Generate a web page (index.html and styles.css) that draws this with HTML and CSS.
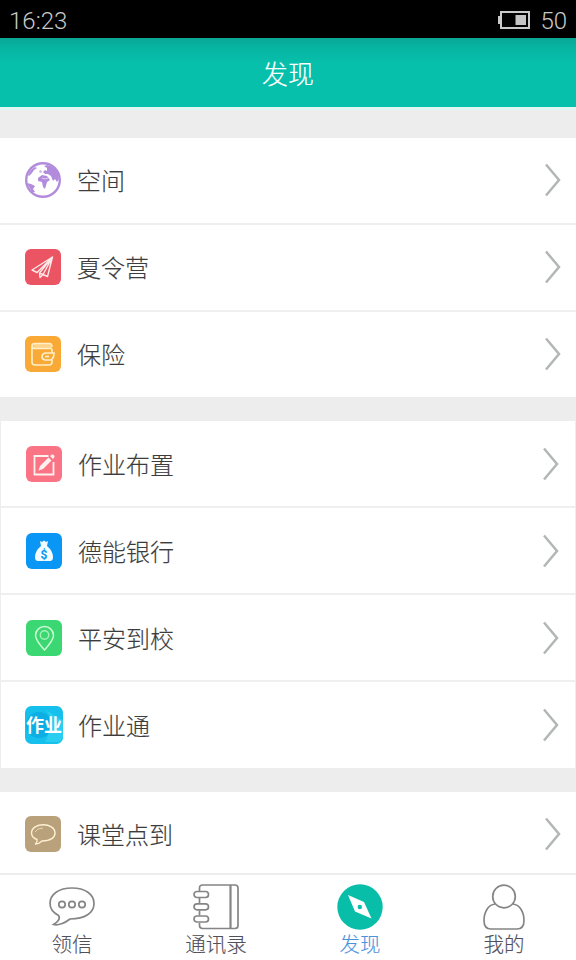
FILE: index.html
```html
<!DOCTYPE html>
<html lang="zh-CN">
<head>
<meta charset="utf-8">
<title>发现</title>
<link rel="stylesheet" href="styles.css">
</head>
<body>
<div class="status">
  <span>16:23</span>
  <div class="power">
    <svg width="32" height="18" viewBox="0 0 32 18"><path d="M3 1H31V17H3Z" fill="none" stroke="#c9c9c9" stroke-width="2"/><path d="M0 5H2V13H0Z" fill="#c9c9c9"/><path d="M17.500 4H28V14H17.500Z" fill="#c4c4c4"/></svg>
    <span>50</span>
  </div>
</div>
<header class="header">发现</header>
<main class="list">
  <section class="group">
    <div class="row">
      <svg class="icon" viewBox="0 0 36 36"><circle cx="18" cy="18" r="18" fill="#b38bdc"/><circle cx="18" cy="18" r="15.600" fill="#fff"/><path d="M3 13L6 8L10 5L12 6L9 8L7 11L4 14ZM19 4L22 3L28 5L33 10L34 17L32 20L30 17L28 19L26 14L23 12L20 12L18 10L20 8L22 9L22 6ZM13 16L17 13L22 14L25 18L22 20L20 27L18 25L17 20L13 19ZM2 21L6 22L10 24L8 27L10 30L7 30Z" fill="#b38bdc"/><path d="M14 9L16 8L17 10L15 11Z" fill="#c9aee6"/><path d="M17 16L20 17L23 16" fill="none" stroke="#f3e9fb" stroke-width=".7"/></svg>
      <span class="label">空间</span>
      <svg class="arrow" viewBox="0 0 18 34"><path d="M2 1.500L15 17L2 32.500"/></svg>
    </div>
    <div class="row">
      <svg class="icon" viewBox="0 0 36 36"><rect width="36" height="36" rx="6" fill="#eb5463"/><path d="M27.500 8L7 21L12 23.500L27.500 8L14.500 24L22.500 27.500L27.500 8L18 25.500L15 28.500L14.500 24" fill="none" stroke="#ffe9e8" stroke-width="1.400" stroke-linejoin="round"/></svg>
      <span class="label">夏令营</span>
      <svg class="arrow" viewBox="0 0 18 34"><path d="M2 1.500L15 17L2 32.500"/></svg>
    </div>
    <div class="row">
      <svg class="icon" viewBox="0 0 36 36"><rect width="36" height="36" rx="6" fill="#f9a936"/><path d="M9 8H25L27 12H8Z" fill="#ffd48a"/><path d="M27 17V14Q27 12.500 25 12.500H9Q7 12 7 10Q7 7.500 10 7.500H24Q27 7.500 27 11M7 10V26Q7 29 10 29H24Q27 29 27 26V24M28 17H20Q17 18 17 20.500Q17 23.500 20 24H26Q29 22 29 17Z" fill="none" stroke="#fff0c9" stroke-width="1.600"/><path d="M20 20.500H24" stroke="#fff0c9" stroke-width="1.800"/></svg>
      <span class="label">保险</span>
      <svg class="arrow" viewBox="0 0 18 34"><path d="M2 1.500L15 17L2 32.500"/></svg>
    </div>
  </section>
  <section class="group inset">
    <div class="row">
      <svg class="icon" viewBox="0 0 36 36"><rect width="36" height="36" rx="6" fill="#fb7486"/><path d="M22.500 10H8.500V28.500H27.500V16" fill="none" stroke="#fff1ee" stroke-width="1.800"/><path d="M12.500 24.500L14 20L22.500 11.500L25.500 14.500L17 23ZM24 10L26 8.500Q28 8 28.500 10Q29 11 27 13Z" fill="#fff1ee"/></svg>
      <span class="label">作业布置</span>
      <svg class="arrow" viewBox="0 0 18 34"><path d="M2 1.500L15 17L2 32.500"/></svg>
    </div>
    <div class="row">
      <svg class="icon" viewBox="0 0 36 36"><rect width="36" height="36" rx="6" fill="#0996f5"/><path d="M14 8L16 9L18 7.500L20 9L22 8L21 13Q27 18 27 24Q27 28 24 28H12Q9 28 9 24Q9 18 15 13Z" fill="#f4fbff"/><text class="money" x="18" y="25.500" text-anchor="middle">$</text></svg>
      <span class="label">德能银行</span>
      <svg class="arrow" viewBox="0 0 18 34"><path d="M2 1.500L15 17L2 32.500"/></svg>
    </div>
    <div class="row">
      <svg class="icon" viewBox="0 0 36 36"><rect width="36" height="36" rx="6" fill="#3bd772"/><path d="M18.500 30Q9.500 20 9.500 15.500A9 9 0 0 1 27.500 15.500Q27.500 20 18.500 30Z" fill="none" stroke="#cffbd6" stroke-width="1.500"/><circle cx="18.500" cy="15" r="4.200" fill="none" stroke="#a5f1b7" stroke-width="1.400"/></svg>
      <span class="label">平安到校</span>
      <svg class="arrow" viewBox="0 0 18 34"><path d="M2 1.500L15 17L2 32.500"/></svg>
    </div>
    <div class="row">
      <svg class="icon wide" viewBox="0 0 38 38"><rect width="38" height="38" rx="6.500" fill="#15c0ec"/><circle cx="14" cy="19" r="13" fill="#0caee3"/><path d="M20 3Q31 15 20 36H32Q38 36 38 30V14Q29 10 20 3Z" fill="#28cdf0"/><text class="brand" x="19" y="25.500" text-anchor="middle">作业</text></svg>
      <span class="label">作业通</span>
      <svg class="arrow" viewBox="0 0 18 34"><path d="M2 1.500L15 17L2 32.500"/></svg>
    </div>
  </section>
  <section class="group">
    <div class="row">
      <svg class="icon" viewBox="0 0 36 36"><rect width="36" height="36" rx="6" fill="#b9a27b"/><path d="M12 23.500Q6.500 21.500 6.500 17C6.500 6 30 6 30 17Q30 24.500 17 25Q14 28 10.500 28Q12.500 26 12 23.500Z" fill="none" stroke="#ffefd2" stroke-width="1.400" stroke-linejoin="round"/><path d="M10 16Q12 12 18 12" fill="none" stroke="#ead6b3"/></svg>
      <span class="label">课堂点到</span>
      <svg class="arrow" viewBox="0 0 18 34"><path d="M2 1.500L15 17L2 32.500"/></svg>
    </div>
  </section>
</main>
<nav class="tabs">
  <div class="tab">
    <svg viewBox="0 0 46 46"><path d="M9.500 31.500C4 28.500 1 24 1 19.500C1 10 10 4 23 4C36 4 45 10 45 19.500C45 29 36 35 21 35C16 39 9 42 4.500 40.500C8 38.500 12 35 9.500 31.500Z"/><circle cx="13" cy="20.500" r="3.200"/><circle cx="23" cy="20.500" r="3.200"/><circle cx="33" cy="20.500" r="3.200"/></svg>
    <span>领信</span>
  </div>
  <div class="tab">
    <svg viewBox="0 0 46 46"><path d="M6.500 7V4Q6.500 1 9.500 1H42Q45 1 45 4V41.500Q45 44.500 42 44.500H9.500Q6.500 44.500 6.500 41.500V39M6.500 14V19M6.500 26.500V31.500"/><path d="M37.500 1V44.500" stroke-width="2.200"/><rect x="1" y="7.500" width="14.500" height="6" rx="3"/><rect x="1" y="19.800" width="14.500" height="6" rx="3"/><rect x="1" y="32" width="14.500" height="6" rx="3"/></svg>
    <span>通讯录</span>
  </div>
  <div class="tab active">
    <svg viewBox="0 0 46 46"><circle class="disc" cx="23" cy="23" r="22.700"/><path class="needle" d="M11 11L27 18L34.500 34.500L18 27.500Z"/><circle class="disc" cx="22.800" cy="23" r="2.200"/></svg>
    <span>发现</span>
  </div>
  <div class="tab">
    <svg viewBox="0 0 46 46"><circle cx="23" cy="12.500" r="11.300"/><path d="M14 20C7 21 3 28 3 36.500Q3 45 10 45H36Q43 45 43 36.500C43 28 39 21 32 20"/></svg>
    <span>我的</span>
  </div>
</nav>
</body>
</html>
```

FILE: styles.css
```css
* { box-sizing: border-box; }
body {
  margin: 0;
  width: 576px;
  height: 960px;
  display: flex;
  flex-direction: column;
  overflow: hidden;
  background: #ededed;
  font-family: "Noto Sans CJK SC", sans-serif;
  font-weight: 300;
  color: #3c3c3c;
}
svg { display: block; flex: none; }
.status {
  height: 38px;
  flex: none;
  display: flex;
  align-items: center;
  justify-content: space-between;
  padding: 3px 9px 0 9px;
  background: #000;
  color: #c8c8c8;
  font-family: Roboto, sans-serif;
  font-size: 24px;
}
.power { display: flex; align-items: center; gap: 10px; }
.power svg { margin-top: -2px; }
.header {
  height: 72px;
  flex: none;
  display: flex;
  align-items: center;
  justify-content: center;
  border-bottom: 3px solid #e0f7f6;
  background: linear-gradient(#0ba694, #06b5a2 10px, #06c0ac 26px);
  color: #fff;
  font-size: 26px;
  -webkit-text-stroke: 0.15px;
}
.list {
  flex: none;
  height: 763px;
  display: flex;
  flex-direction: column;
  gap: 24px;
  padding-top: 28px;
}
.group { background: #fff; }
.row {
  height: 87px;
  display: flex;
  align-items: center;
  padding: 0 14px 2px 25px;
  border-bottom: 2px solid #efefef;
}
.row:last-child { height: 85px; border-bottom: 0; }
.inset { border: solid #ededed; border-width: 0 1.5px; }
.inset .row { padding-right: 15px; padding-bottom: 0; }
.inset .row:last-child { height: 86px; }
.icon { width: 36px; height: 36px; }
.wide { width: 38px; height: 38px; margin: 0 -1px; }
.label { flex: 1; margin-left: 16px; font-size: 24px; line-height: 36px; -webkit-text-stroke: 0.15px; }
.arrow { width: 18px; height: 34px; fill: none; stroke: #b2b6b5; stroke-width: 2.5; }
.money { font: bold 12px Roboto, sans-serif; fill: #0996f5; }
.brand { font-weight: 700; font-size: 18px; fill: #fff; }
.tabs {
  height: 87px;
  flex: none;
  display: grid;
  grid-template-columns: repeat(4, 1fr);
  border-top: 2px solid #ededed;
  background: #fff;
}
.tab {
  display: flex;
  flex-direction: column;
  align-items: center;
  padding-top: 9px;
  font-size: 20.500px;
  line-height: 26px;
  color: #50505a;
  -webkit-text-stroke: 0.12px;
}
.tab svg { width: 46px; height: 46px; fill: none; stroke: #858585; stroke-width: 1.700; }
.tab .disc { fill: #08bea8; stroke: none; }
.tab .needle { fill: #fff; stroke: none; }
.tab.active { color: #4c91dc; }
```
